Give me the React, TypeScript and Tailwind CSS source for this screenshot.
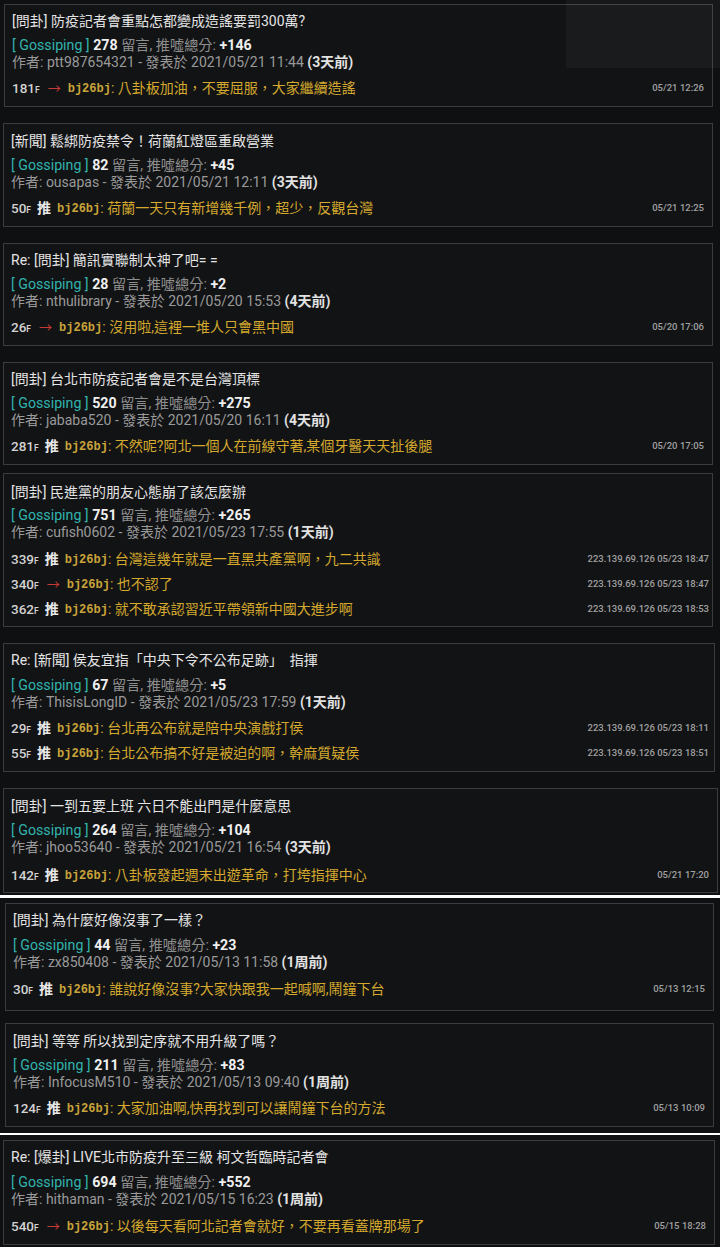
import React from "react";

type Comment = { floor: string; tag: "push" | "arrow"; text: string; time: string };
type Post = {
  title: string;
  count: string;
  score: string;
  author: string;
  date: string;
  ago: string;
  comments: Comment[];
  box: string;
  g: string;
  cm: string;
  tm?: string;
};

const posts: Post[] = [
  {
    title: "[問卦] 防疫記者會重點怎都變成造謠要罰300萬?",
    count: "278",
    score: "+146",
    author: "ptt987654321",
    date: "2021/05/21 11:44",
    ago: "(3天前)",
    comments: [{ floor: "181", tag: "arrow", text: "八卦板加油，不要屈服，大家繼續造謠", time: "05/21 12:26" }],
    box: "mt-[4px] ml-[4px] mr-[7px] pt-[5px] pb-[5px]",
    g: "mt-[4px]",
    cm: "mt-[5px]",
  },
  {
    title: "[新聞] 鬆綁防疫禁令！荷蘭紅燈區重啟營業",
    count: "82",
    score: "+45",
    author: "ousapas",
    date: "2021/05/21 12:11",
    ago: "(3天前)",
    comments: [{ floor: "50", tag: "push", text: "荷蘭一天只有新增幾千例，超少，反觀台灣", time: "05/21 12:25" }],
    box: "mt-[16px] ml-[3px] mr-[7px] pt-[6px] pb-[5px]",
    g: "mt-[4px]",
    cm: "mt-[5px]",
  },
  {
    title: "Re: [問卦] 簡訊實聯制太神了吧= =",
    count: "28",
    score: "+2",
    author: "nthulibrary",
    date: "2021/05/20 15:53",
    ago: "(4天前)",
    comments: [{ floor: "26", tag: "arrow", text: "沒用啦,這裡一堆人只會黑中國", time: "05/20 17:06" }],
    box: "mt-[16px] ml-[3px] mr-[7px] pt-[5px] pb-[5px]",
    g: "mt-[4px]",
    cm: "mt-[5px]",
  },
  {
    title: "[問卦] 台北市防疫記者會是不是台灣頂標",
    count: "520",
    score: "+275",
    author: "jababa520",
    date: "2021/05/20 16:11",
    ago: "(4天前)",
    comments: [{ floor: "281", tag: "push", text: "不然呢?阿北一個人在前線守著,某個牙醫天天扯後腿", time: "05/20 17:05" }],
    box: "mt-[16px] ml-[3px] mr-[7px] pt-[5px] pb-[5px]",
    g: "mt-[4px]",
    cm: "mt-[5px]",
  },
  {
    title: "[問卦] 民進黨的朋友心態崩了該怎麼辦",
    count: "751",
    score: "+265",
    author: "cufish0602",
    date: "2021/05/23 17:55",
    ago: "(1天前)",
    comments: [
      { floor: "339", tag: "push", text: "台灣這幾年就是一直黑共產黨啊，九二共識", time: "223.139.69.126 05/23 18:47" },
      { floor: "340", tag: "arrow", text: "也不認了", time: "223.139.69.126 05/23 18:47" },
      { floor: "362", tag: "push", text: "就不敢承認習近平帶領新中國大進步啊", time: "223.139.69.126 05/23 18:53" },
    ],
    box: "mt-[8px] ml-[3px] mr-[7px] pt-[7px] pb-[4px]",
    g: "mt-[3px]",
    cm: "mt-[6px]",
    tm: "mr-[-5px]",
  },
  {
    title: "Re: [新聞] 侯友宜指「中央下令不公布足跡」　指揮",
    count: "67",
    score: "+5",
    author: "ThisisLongID",
    date: "2021/05/23 17:59",
    ago: "(1天前)",
    comments: [
      { floor: "29", tag: "push", text: "台北再公布就是陪中央演戲打侯", time: "223.139.69.126 05/23 18:11" },
      { floor: "55", tag: "push", text: "台北公布搞不好是被迫的啊，幹麻質疑侯", time: "223.139.69.126 05/23 18:51" },
    ],
    box: "mt-[16px] ml-[3px] mr-[5px] pt-[5px] pb-[5px]",
    g: "mt-[5px]",
    cm: "mt-[5px]",
    tm: "mr-[-3px]",
  },
  {
    title: "[問卦] 一到五要上班 六日不能出門是什麼意思",
    count: "264",
    score: "+104",
    author: "jhoo53640",
    date: "2021/05/21 16:54",
    ago: "(3天前)",
    comments: [{ floor: "142", tag: "push", text: "八卦板發起週末出遊革命，打垮指揮中心", time: "05/21 17:20" }],
    box: "mt-[16px] ml-[3px] mr-[2px] pt-[6px] pb-[4px]",
    g: "mt-[4px]",
    cm: "mt-[7px]",
  },
  {
    title: "[問卦] 為什麼好像沒事了一樣？",
    count: "44",
    score: "+23",
    author: "zx850408",
    date: "2021/05/13 11:58",
    ago: "(1周前)",
    comments: [{ floor: "30", tag: "push", text: "誰說好像沒事?大家快跟我一起喊啊,鬧鐘下台", time: "05/13 12:15" }],
    box: "mt-[5px] ml-[5px] mr-[6px] pt-[5px] pb-[8px]",
    g: "mt-[5px]",
    cm: "mt-[6px]",
  },
  {
    title: "[問卦] 等等 所以找到定序就不用升級了嗎？",
    count: "211",
    score: "+83",
    author: "InfocusM510",
    date: "2021/05/13 09:40",
    ago: "(1周前)",
    comments: [{ floor: "124", tag: "push", text: "大家加油啊,快再找到可以讓鬧鐘下台的方法", time: "05/13 10:09" }],
    box: "mt-[12px] ml-[5px] mr-[6px] pt-[6px] pb-[5px]",
    g: "mt-[4px]",
    cm: "mt-[5px]",
  },
  {
    title: "Re: [爆卦] LIVE北市防疫升至三級 柯文哲臨時記者會",
    count: "694",
    score: "+552",
    author: "hithaman",
    date: "2021/05/15 16:23",
    ago: "(1周前)",
    comments: [{ floor: "540", tag: "arrow", text: "以後每天看阿北記者會就好，不要再看蓋牌那場了", time: "05/15 18:28" }],
    box: "mt-[5px] ml-[3px] mr-[5px] pt-[5px] pb-[5px]",
    g: "mt-[5px]",
    cm: "mt-[6px]",
  },
];

function CommentRow({ c, tm }: { c: Comment; tm?: string }) {
  return (
    <div className="flex h-[25px] items-center whitespace-nowrap">
      <span className="text-[13.5px] font-medium text-[#d2d2d2]">{c.floor}</span>
      <span className="text-[8.5px] font-semibold text-[#d2d2d2] mt-[3px]">F</span>
      {c.tag === "push" ? (
        <span className="ml-[6px] w-[14px] text-[14px] font-bold text-[#e8e8e8]">推</span>
      ) : (
        <span className="ml-[8px] w-[14px] text-[13px] text-[#c83a35]">→</span>
      )}
      <span
        className="ml-[6px] text-[12px] font-bold text-[#c9a43a]"
        style={{ fontFamily: "'Liberation Mono', 'DejaVu Sans Mono', monospace" }}
      >
        bj26bj
      </span>
      <span className="text-[14px] text-[#d4a92e]">:&nbsp;{c.text}</span>
      <span className={`ml-auto pr-[1px] text-[9.5px] font-medium text-[#a0a0a0] ${tm ?? ""}`}>{c.time}</span>
    </div>
  );
}

function Card({ p }: { p: Post }) {
  return (
    <div className={`${p.box} border border-[#3b3c3f] bg-[#121315] px-[7px]`}>
      <div className="h-[22px] leading-[22px] text-[14px] text-[#e4e4e4] whitespace-nowrap">{p.title}</div>
      <div className={`${p.g} h-[18px] leading-[18px] text-[14.2px] whitespace-nowrap`}>
        <span className="text-[#31b3ae]">[ Gossiping ]</span>{" "}
        <span className="font-bold text-[#f0f0f0]">{p.count}</span>{" "}
        <span className="text-[#8e8e8e]">留言, 推噓總分:</span>{" "}
        <span className="font-bold text-[#f0f0f0]">{p.score}</span>
      </div>
      <div className="h-[17px] leading-[17px] text-[14px] whitespace-nowrap text-[#9a9a9a]">
        作者: {p.author} - 發表於 {p.date}{" "}
        <span className="font-bold text-[#e2e2e2]">{p.ago}</span>
      </div>
      <div className={p.cm}>
        {p.comments.map((c, i) => (
          <CommentRow key={i} c={c} tm={p.tm} />
        ))}
      </div>
    </div>
  );
}

export default function App() {
  return (
    <div
      className="relative w-[720px] h-[1247px] overflow-hidden bg-[#0f1012]"
      style={{ fontFamily: "Roboto, 'Noto Sans CJK TC', sans-serif" }}
    >
      <div className="flex flex-col">
        {posts.slice(0, 7).map((p, i) => (
          <Card key={i} p={p} />
        ))}
        <div className="mt-[2px] h-[3px] bg-white" />
        <Card p={posts[7]} />
        <Card p={posts[8]} />
        <div className="mt-[6px] h-[2px] bg-white" />
        <Card p={posts[9]} />
      </div>
      <div className="absolute right-0 top-0 h-[68px] w-[154px] bg-white/[0.035]" />
    </div>
  );
}
